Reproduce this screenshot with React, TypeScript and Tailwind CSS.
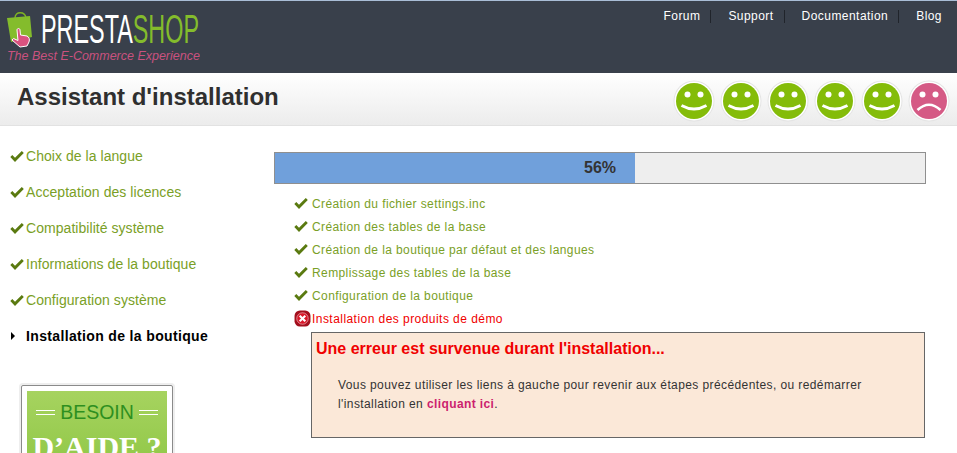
const font = { fontFamily: '"Liberation Sans", Arial, sans-serif' };

function Check({ className }: { className: string }) {
  return (
    <svg viewBox="0 0 14 12" className={className}>
      <path d="M0.3 6.6 L2.3 4.6 L5 7.2 L11.8 0.4 L13.8 2.4 L5 11.6 Z" fill="#5a7a10" />
    </svg>
  );
}

function Smiley({ sad }: { sad?: boolean }) {
  return (
    <svg viewBox="0 0 42 42" className="h-[42px] w-[42px]">
      <circle cx="21" cy="21" r="20.5" fill="#e4e4e4" />
      <circle cx="21" cy="21" r="19.5" fill="#ffffff" />
      <circle cx="21" cy="21" r="18" fill={sad ? "#d55a85" : "#84bc09"} />
      <circle cx="14.5" cy="14.5" r="3" fill="#fff" />
      <circle cx="27.5" cy="14.5" r="3" fill="#fff" />
      {sad ? (
        <path d="M9.5 30 Q21 19.5 32.5 30" fill="none" stroke="#fff" strokeWidth="2.6" />
      ) : (
        <path d="M8.5 25.5 Q21 32.5 33.5 25.5" fill="none" stroke="#fff" strokeWidth="2.8" />
      )}
    </svg>
  );
}

function Logo() {
  return (
    <div className="flex h-[46px] items-start">
      <svg viewBox="0 0 28 36" className="ml-[6px] mt-[11px] h-[36px] w-[28px] shrink-0">
        <path d="M9 6 C9 -1 19 -1 20 6" fill="none" stroke="#7fb522" strokeWidth="1.4" />
        <path d="M1 6 L24 4 L26 25 L5 30 Z" fill="#84bc2c" />
        <path d="M11 18 C11 16 14 16 14 18 L14.5 23 L21 24 C23 25 24 27 23 30 L21 34 L14 35 L6 28 L7.5 26.5 L12 28.5 Z" fill="#d9527f" stroke="#fff" strokeWidth="1" />
      </svg>
      <div className="ml-[7px] mt-[12px] flex h-[33px] w-[160px] origin-left scale-x-[0.57] items-center whitespace-nowrap text-[41px] leading-[33px]">
        <span className="text-white">PRESTA</span>
        <span className="text-[#84bc2c]">SHOP</span>
      </div>
    </div>
  );
}

const side = ["Choix de la langue", "Acceptation des licences", "Compatibilité système", "Informations de la boutique", "Configuration système"];
const steps = ["Création du fichier settings.inc", "Création des tables de la base", "Création de la boutique par défaut et des langues", "Remplissage des tables de la base", "Configuration de la boutique"];
const links = ["Forum", "Support", "Documentation", "Blog"];

export default function App() {
  return (
    <div className="h-[453px] w-[957px] overflow-hidden bg-white" style={font}>
      <header className="flex h-[73px] justify-between border-t border-[#a9bdd6] bg-[#39404b]">
        <div className="flex flex-col">
          <Logo />
          <span className="ml-[7px] origin-left scale-x-[0.96] whitespace-nowrap text-[13px] italic leading-[18px] text-[#c9527f]">The Best E-Commerce Experience</span>
        </div>
        <nav className="mr-[15px] mt-[9px] flex h-[13px] items-center text-[12px] tracking-[0.45px] text-white">
          {links.map((l, i) => (
            <span key={l} className={i < 3 ? "mr-[17px] flex h-[13px] items-center border-r border-[#20242b] pr-[10px] leading-[13px]" : "leading-[13px]"}>{l}</span>
          ))}
        </nav>
      </header>
      <div className="flex h-[53px] items-center justify-between border-b border-[#e2e2e2] bg-gradient-to-b from-white to-[#ececec] pl-[17px] pr-[7px]">
        <h1 className="-mt-[4px] text-[24px] font-bold text-[#2f2f2f]">Assistant d'installation</h1>
        <div className="mt-[3px] flex gap-[5px]">
          {[0, 1, 2, 3, 4].map((i) => <Smiley key={i} />)}
          <Smiley sad />
        </div>
      </div>
      <main className="flex">
        <aside className="w-[274px] shrink-0 pl-[10px] pt-[21px]">
          <ul>
            {side.map((s) => (
              <li key={s} className="flex h-[36px] items-start text-[14px] leading-[18px] tracking-[0.05px] text-[#7aa026]">
                <Check className="mr-[2px] mt-[3px] h-[13px] w-[14px] shrink-0" />
                {s}
              </li>
            ))}
            <li className="flex h-[36px] items-start text-[14px] font-bold leading-[18px] tracking-[0.35px] text-black">
              <span className="ml-[1px] mr-[11px] mt-[5px] h-0 w-0 border-y-[4px] border-l-[4px] border-y-transparent border-l-black" />
              Installation de la boutique
            </li>
          </ul>
          <div className="ml-[11px] mt-[22px] w-[152px] rounded-[2px] border border-[#8a8a8a] bg-white p-[5px] shadow-[0_0_0_2px_#eeeeee]">
            <div className="h-[100px] bg-gradient-to-b from-[#a6d35f] to-[#8ac43f] text-center">
              <div className="flex items-center justify-center gap-[5px] pt-[9px] text-[19.5px] leading-[24px] text-[#2e8f1f]">
                <span className="h-[5px] w-[19px] border-y border-white" />
                BESOIN
                <span className="h-[5px] w-[19px] border-y border-white" />
              </div>
              <div className="mt-[5px] text-[30px] font-bold leading-[36px] text-white" style={{ fontFamily: '"Liberation Serif", serif' }}>D’AIDE ?</div>
            </div>
          </div>
        </aside>
        <section className="w-[652px] pt-[26px]">
          <div className="relative h-[32px] border border-[#8f8f8f] bg-[#eeeeee]">
            <div className="h-full w-[360px] bg-[#70a0db]" />
            <span className="absolute inset-y-0 left-[309px] flex items-center text-[16px] font-bold text-[#333]">56%</span>
          </div>
          <ul className="mt-[8px] pl-[20px]">
            {steps.map((s) => (
              <li key={s} className="flex h-[23px] items-center text-[12px] tracking-[0.4px] text-[#7aa026]">
                <Check className="mr-[4px] h-[13px] w-[14px] shrink-0" />
                {s}
              </li>
            ))}
            <li className="flex h-[23px] items-center text-[12px] tracking-[0.45px] text-[#f00000]">
              <svg viewBox="0 0 16 16" className="mr-[1px] h-[17px] w-[17px] shrink-0">
                <rect x="0.5" y="0.5" width="15" height="15" rx="5" fill="#a30f1d" />
                <circle cx="8" cy="8" r="5.4" fill="#d8182a" stroke="#f4c4c8" strokeWidth="0.6" />
                <path d="M5.4 5.4 L10.6 10.6 M10.6 5.4 L5.4 10.6" stroke="#fff" strokeWidth="2" />
              </svg>
              Installation des produits de démo
            </li>
          </ul>
          <div className="ml-[37px] mt-[2px] h-[106px] w-[614px] border border-[#666] bg-[#fbe8d8] pl-[4px] pt-[7px]">
            <h2 className="text-[16px] font-bold leading-[18px] text-[#f00000]">Une erreur est survenue durant l'installation...</h2>
            <p className="mt-[18px] pl-[22px] text-[12px] leading-[19px] tracking-[0.4px] text-[#333]">
              Vous pouvez utiliser les liens à gauche pour revenir aux étapes précédentes, ou redémarrer
              <br />
              l'installation en <b className="text-[#cc1f6e]">cliquant ici</b>.
            </p>
          </div>
        </section>
      </main>
    </div>
  );
}
